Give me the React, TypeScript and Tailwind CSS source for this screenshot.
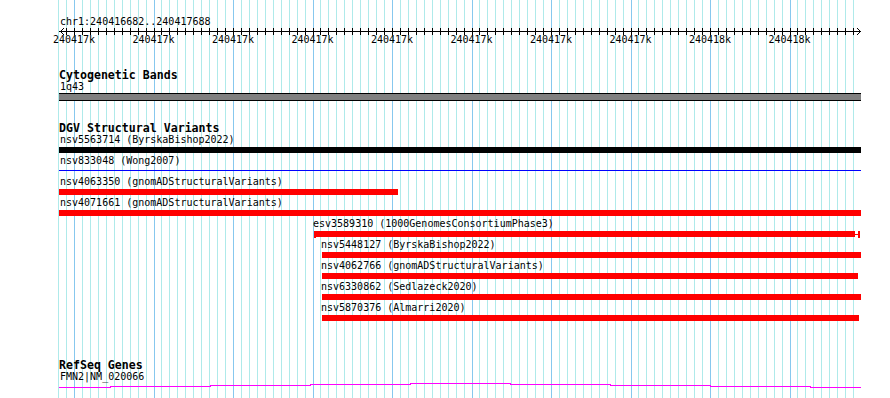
import React from "react";

const MINOR_STEP = 7.95;
const MAJOR0 = 74;

type Kind = "black" | "line" | "red" | "capped";
type Feature = { label: string; labelX: number; start: number; end: number; kind: Kind };

const features: Feature[] = [
  { label: "nsv5563714 (ByrskaBishop2022)", labelX: 60, start: 59, end: 861, kind: "black" },
  { label: "nsv833048 (Wong2007)", labelX: 60, start: 59, end: 861, kind: "line" },
  { label: "nsv4063350 (gnomADStructuralVariants)", labelX: 60, start: 59, end: 398, kind: "red" },
  { label: "nsv4071661 (gnomADStructuralVariants)", labelX: 60, start: 59, end: 861, kind: "red" },
  { label: "esv3589310 (1000GenomesConsortiumPhase3)", labelX: 313, start: 314, end: 860, kind: "capped" },
  { label: "nsv5448127 (ByrskaBishop2022)", labelX: 321, start: 322, end: 861, kind: "red" },
  { label: "nsv4062766 (gnomADStructuralVariants)", labelX: 321, start: 322, end: 858, kind: "red" },
  { label: "nsv6330862 (Sedlazeck2020)", labelX: 321, start: 322, end: 861, kind: "red" },
  { label: "nsv5870376 (Almarri2020)", labelX: 321, start: 322, end: 859, kind: "red" },
];

const tickLabels = [
  "240417k",
  "240417k",
  "240417k",
  "240417k",
  "240417k",
  "240417k",
  "240417k",
  "240417k",
  "240418k",
  "240418k",
];

function gridXs() {
  const xs: { x: number; major: boolean }[] = [];
  for (let i = -2; i <= 98; i++) {
    xs.push({ x: Math.round(MAJOR0 + i * MINOR_STEP) + 0.5, major: i % 10 === 0 });
  }
  return xs;
}

function Grid() {
  const xs = gridXs();
  return (
    <svg className="absolute inset-0" width={890} height={398} shapeRendering="crispEdges">
      {xs.map((g, i) => (
        <line
          key={i}
          x1={g.x}
          x2={g.x}
          y1={0}
          y2={398}
          stroke={g.major ? "#87c8ee" : "#afeaea"}
          strokeWidth={1}
        />
      ))}
    </svg>
  );
}

function Axis() {
  const xs = gridXs().filter((g) => g.x > 62);
  return (
    <svg className="block" width={890} height={8} shapeRendering="crispEdges">
      <line x1={59} x2={861} y1={4.5} y2={4.5} stroke="#000" strokeWidth={1} />
      {xs.map((g, i) => (
        <line key={i} x1={g.x} x2={g.x} y1={1} y2={8} stroke="#000" strokeWidth={1} />
      ))}
      <polyline points="64,1 60.5,4.5 64,8" fill="none" stroke="#000" strokeWidth={1} shapeRendering="auto" />
      <polyline points="857,1 860.5,4.5 857,8" fill="none" stroke="#000" strokeWidth={1} shapeRendering="auto" />
    </svg>
  );
}

function FeatureBar({ f }: { f: Feature }) {
  const style = { marginLeft: f.start, width: f.end - f.start };
  if (f.kind === "line") {
    return (
      <div className="mt-[2px] h-[6px] flex items-start" style={style}>
        <div className="mt-[2px] h-px w-full bg-[#0000ff]" />
      </div>
    );
  }
  if (f.kind === "capped") {
    return (
      <div className="mt-[2px] h-[6px] flex items-center" style={style}>
        <div className="w-[2px] h-[7px] shrink-0 bg-[#ff0000]" />
        <div className="flex-1 h-[6px] bg-[#ff0000]" />
        <div className="w-[3px] h-px shrink-0 bg-[#ff0000]" />
        <div className="w-[2px] h-[7px] shrink-0 bg-[#ff0000]" />
      </div>
    );
  }
  return (
    <div
      className={`mt-[2px] h-[6px] ${f.kind === "black" ? "bg-black" : "bg-[#ff0000]"}`}
      style={style}
    />
  );
}

function FeatureRow({ f }: { f: Feature }) {
  return (
    <div className="h-[21px]">
      <div className="h-[10px] text-[10px] leading-[10px] whitespace-nowrap" style={{ marginLeft: f.labelX }}>
        {f.label}
      </div>
      <FeatureBar f={f} />
    </div>
  );
}

function Magenta() {
  const d =
    "M59 5.5 H110 V4.5 H210 V3.5 H310 V2.5 H410 V1.5 H510 V2.5 H610 V3.5 H710 V4.5 H810 V5.5 H861";
  return (
    <svg className="block" width={890} height={8} shapeRendering="crispEdges">
      <path d={d} fill="none" stroke="#ff00ff" strokeWidth={1} />
    </svg>
  );
}

export default function App() {
  return (
    <div
      className="relative w-[890px] h-[398px] overflow-hidden bg-white text-black"
      style={{ fontFamily: '"DejaVu Sans Mono", monospace' }}
    >
      <Grid />
      <div className="relative flex flex-col">
        {/* ruler */}
        <div className="h-[17px]" />
        <div className="h-[10px] text-[10px] leading-[10px] ml-[60px] whitespace-nowrap">
          chr1:240416682..240417688
        </div>
        <Axis />
        <div className="flex h-[10px] ml-[34.25px] text-[10px] leading-[10px]">
          {tickLabels.map((t, i) => (
            <div key={i} className="w-[79.5px] shrink-0 text-center whitespace-nowrap">
              {t}
            </div>
          ))}
        </div>

        {/* Cytogenetic Bands */}
        <div className="h-[23.5px]" />
        <div className="h-[12px] text-[11.6px] leading-[12px] font-bold ml-[59px] whitespace-nowrap">
          Cytogenetic Bands
        </div>
        <div className="h-[1.5px]" />
        <div className="h-[10px] text-[10px] leading-[10px] ml-[60px]">1q43</div>
        <div className="h-[1px]" />
        <div className="ml-[59px] w-[802px] h-[8px] bg-[#808080] border-y border-black" />

        {/* DGV */}
        <div className="h-[20.5px]" />
        <div className="h-[12px] text-[11.6px] leading-[12px] font-bold ml-[59px] whitespace-nowrap">
          DGV Structural Variants
        </div>
        <div className="h-[1.5px]" />
        {features.map((f, i) => (
          <FeatureRow key={i} f={f} />
        ))}

        {/* RefSeq */}
        <div className="h-[34.5px]" />
        <div className="h-[12px] text-[11.6px] leading-[12px] font-bold ml-[59px] whitespace-nowrap">
          RefSeq Genes
        </div>
        <div className="h-[1px]" />
        <div className="h-[10px] text-[10px] leading-[10px] ml-[60px] whitespace-nowrap">FMN2|NM_020066</div>
        <Magenta />
      </div>
    </div>
  );
}
